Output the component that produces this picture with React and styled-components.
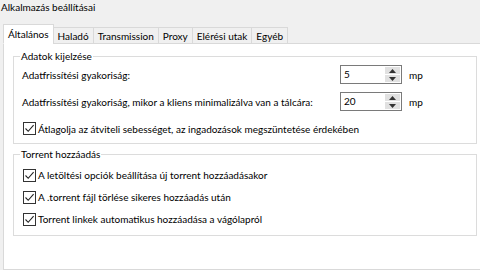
import React from 'react';
import styled, { createGlobalStyle } from 'styled-components';

const Global = createGlobalStyle`
    html, body {
        margin: 0;
        padding: 0;
        background: #f0f0f0;
        font-family: Lato, 'Noto Sans', sans-serif;
        font-size: 10px;
        color: #000;
        overflow: hidden;
    }
`;

const Window = styled.div`
    width: 480px;
    height: 270px;
    display: flex;
    flex-direction: column;
`;

const Title = styled.div`
    height: 24px;
    line-height: 15px;
    padding-left: 1px;
`;

const TabBar = styled.div`
    display: flex;
    align-items: flex-end;
    margin-left: 3px;
    height: 20px;
    position: relative;
    z-index: 1;
    margin-bottom: -1px;
`;

const Tab = styled.div`
    height: ${p => (p.active ? '20px' : '17px')};
    line-height: ${p => (p.active ? '19px' : '16px')};
    padding: 0 4px;
    border: 1px solid #d9d9d9;
    border-bottom: ${p => (p.active ? '1px solid #fff' : '1px solid #d9d9d9')};
    margin-left: ${p => (p.first ? '0' : '-1px')};
    background: ${p => (p.active ? '#fff' : '#f0f0f0')};
    box-sizing: border-box;
    white-space: nowrap;
`;

const Panel = styled.div`
    flex: 1;
    margin-left: 3px;
    margin-right: -4px;
    background: #fff;
    border: 1px solid #d9d9d9;
    padding: 8px 6px 0 9px;
`;

const Group = styled.fieldset`
    margin: 0 0 ${p => p.gap || 0}px 0;
    border: 1px solid #dcdcdc;
    padding: ${p => p.pad || '0 8px 1px 8px'};
`;

const Legend = styled.legend`
    padding: 0 1px;
    margin-left: -2px;
    line-height: 9px;
`;

const FieldRow = styled.div`
    display: grid;
    grid-template-columns: 311px 62px auto;
    column-gap: 7px;
    align-items: center;
    height: 27px;
`;

const Spin = styled.div`
    display: flex;
    height: 19px;
    border: 1px solid #7a7a7a;
    box-sizing: border-box;
    background: #fff;
`;

const SpinValue = styled.div`
    flex: 1;
    padding-left: 3px;
    line-height: 16px;
`;

const SpinButtons = styled.div`
    width: 15px;
    display: flex;
    flex-direction: column;
    padding: 1px 1px 1px 0;
    gap: 1px;
`;

const SpinButton = styled.div`
    flex: 1;
    background: #e1e1e1;
    display: flex;
    align-items: center;
    justify-content: center;
`;

const CheckRow = styled.label`
    display: flex;
    align-items: center;
    gap: 2px;
    height: ${p => p.h || 27}px;
    margin-left: 1px;
`;

const Box = styled.span`
    width: 13px;
    height: 13px;
    box-sizing: border-box;
    border: 1px solid #333;
    background: #fff;
    display: flex;
    align-items: center;
    justify-content: center;
`;

const Arrow = ({ up }) => (
    <svg width="7" height="4" viewBox="0 0 7 4">
        <path d={up ? 'M0 4 L3.5 0 L7 4 Z' : 'M0 0 L3.5 4 L7 0 Z'} fill="#333" />
    </svg>
);

const Spinner = ({ value }) => (
    <Spin>
        <SpinValue>{value}</SpinValue>
        <SpinButtons>
            <SpinButton><Arrow up /></SpinButton>
            <SpinButton><Arrow /></SpinButton>
        </SpinButtons>
    </Spin>
);

const Check = ({ children, h }) => (
    <CheckRow h={h}>
        <Box>
            <svg width="11" height="11" viewBox="0 0 11 11">
                <path d="M1.5 5.5 L4.2 8.3 L9.6 2.2" fill="none" stroke="#222" strokeWidth="1.1" />
            </svg>
        </Box>
        {children}
    </CheckRow>
);

const tabs = ['Általános', 'Haladó', 'Transmission', 'Proxy', 'Elérési utak', 'Egyéb'];

export default function App() {
    return (
        <Window>
            <Global />
            <Title>Alkalmazás beállításai</Title>
            <TabBar>
                {tabs.map((t, i) => (
                    <Tab key={t} active={i === 0} first={i === 0}>{t}</Tab>
                ))}
            </TabBar>
            <Panel>
                <Group gap={6}>
                    <Legend>Adatok kijelzése</Legend>
                    <FieldRow>
                        <span>Adatfrissítési gyakoriság:</span>
                        <Spinner value="5" />
                        <span>mp</span>
                    </FieldRow>
                    <FieldRow>
                        <span>Adatfrissítési gyakoriság, mikor a kliens minimalizálva van a tálcára:</span>
                        <Spinner value="20" />
                        <span>mp</span>
                    </FieldRow>
                    <Check>Átlagolja az átviteli sebességet, az ingadozások megszüntetése érdekében</Check>
                </Group>
                <Group pad="5px 8px 5px 8px">
                    <Legend>Torrent hozzáadás</Legend>
                    <Check h={22}>A letöltési opciók beállítása új torrent hozzáadásakor</Check>
                    <Check h={22}>A .torrent fájl törlése sikeres hozzáadás után</Check>
                    <Check h={22}>Torrent linkek automatikus hozzáadása a vágólapról</Check>
                </Group>
            </Panel>
        </Window>
    );
}
